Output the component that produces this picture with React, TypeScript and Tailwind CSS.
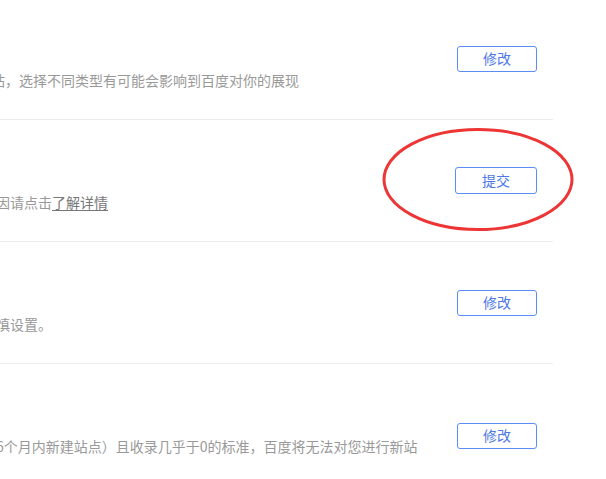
import type { ReactNode } from "react";

type Row = {
  title: string;
  desc: ReactNode;
  action: string;
  highlight?: boolean;
  nudge?: boolean;
};

const rows: Row[] = [
  {
    title: "站点类型",
    desc: "站点类型分为资讯类站点和服务类网站，选择不同类型有可能会影响到百度对你的展现",
    action: "修改",
    nudge: true,
  },
  {
    title: "ICP备案",
    desc: (
      <>
        备案信息校验未通过，想知道具体原因请点击
        <a href="#" className="text-[#777] underline underline-offset-2">
          了解详情
        </a>
      </>
    ),
    action: "提交",
    highlight: true,
  },
  {
    title: "站点领域",
    desc: "设置会影响搜索结果展现形式，请谨慎设置。",
    action: "修改",
  },
  {
    title: "新站保护",
    desc: "如果您的站点不符合新站的条件（近6个月内新建站点）且收录几乎于0的标准，百度将无法对您进行新站保护。",
    action: "修改",
  },
];

function ActionButton({ label, big }: { label: string; big?: boolean }) {
  return (
    <button
      className={
        big
          ? "w-[82px] h-[27px] shrink-0 rounded-[3px] border border-[#5b8ef4] bg-white text-[14px] text-[#4d78e8]"
          : "w-[80px] h-[26px] shrink-0 rounded-[3px] border border-[#5b8ef4] bg-white text-[14px] text-[#4d78e8]"
      }
    >
      {label}
    </button>
  );
}

export default function App() {
  return (
    <div
      className="relative w-[606px] h-[479px] overflow-hidden bg-white"
      style={{ fontFamily: '"Noto Sans CJK SC", "Noto Sans", sans-serif' }}
    >
      {/* page is scrolled right: list starts off-screen */}
      <div className="-ml-[228px] -mt-[2px] w-[781px]">
        {rows.map((row, i) => (
          <div
            key={i}
            className="flex items-center justify-between py-[28px] pr-4 border-b border-[#ececec]"
          >
            <div className="w-[652px]">
              <div className="text-[16px] leading-[24px] text-[#333] mb-[19px]">{row.title}</div>
              <p
                className={
                  row.nudge
                    ? "-indent-[5px] text-[14px] leading-[22px] text-[#999]"
                    : "text-[14px] leading-[22px] text-[#999]"
                }
              >
                {row.desc}
              </p>
            </div>
            <ActionButton label={row.action} big={row.highlight} />
          </div>
        ))}
      </div>

      {/* red annotation ring */}
      <svg
        className="absolute left-[380px] top-[126px] pointer-events-none"
        width="198"
        height="108"
        viewBox="0 0 198 108"
      >
        <ellipse cx="98" cy="53.5" rx="94" ry="50" fill="none" stroke="#ee3535" strokeWidth="3" />
      </svg>
    </div>
  );
}
